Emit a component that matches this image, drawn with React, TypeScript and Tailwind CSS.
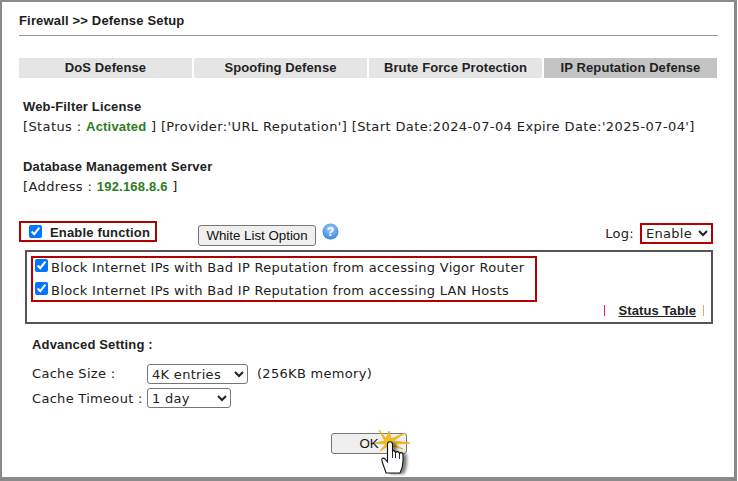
function HandCursor() {
  const hand = "M9.5 31 L7 28 C5 26 3 28 4 30 C5 34 7 38 8 42 L22 42 C24 38 25 35 25 30 L25 24 C25 21 22 21 21.5 23 C21 20 18 20 17.5 22 C17 19 14.5 19 14.5 21 L14.5 13 C14.5 10 9.5 10 9.5 13 Z";
  return (
    <svg className="absolute left-[47px] top-[-2px] overflow-visible" width="32" height="44" viewBox="0 0 32 44">
      <defs>
        <filter id="soft" x="-30%" y="-30%" width="160%" height="160%">
          <feGaussianBlur stdDeviation="1.5" />
        </filter>
      </defs>
      <path d="M1 -1 L8 8 L11 0 L13 8 L27 2 L15 10 L32 12 L15 13 L25 18 L14 15 L12 22 L10 15 L2 20 L8 13 L-3 12 L7 10 Z" fill="#f0c020" stroke="#eab41c" strokeWidth="1" />
      <path d={hand} fill="#000000" fillOpacity="0.5" filter="url(#soft)" transform="translate(4 1)" />
      <path d={hand} fill="#ffffff" stroke="#111111" strokeWidth="1.1" />
      <path d="M14.5 21 V27 M17.5 22 V27 M21.5 23 V28" stroke="#111111" strokeWidth="0.9" fill="none" />
    </svg>
  );
}

function HelpIcon() {
  return (
    <svg width="17" height="17" viewBox="0 0 17 17" className="shrink-0">
      <defs>
        <radialGradient id="help" cx="50%" cy="35%" r="70%">
          <stop offset="0%" stopColor="#a8d0fa" />
          <stop offset="100%" stopColor="#2f7fe0" />
        </radialGradient>
      </defs>
      <circle cx="8.5" cy="8.5" r="8" fill="url(#help)" />
      <text x="8.5" y="13" textAnchor="middle" fontSize="12" fontWeight="700" fill="#ffffff" fontFamily="Liberation Sans, sans-serif">?</text>
    </svg>
  );
}

const tabs = ["DoS Defense", "Spoofing Defense", "Brute Force Protection", "IP Reputation Defense"];

export default function App() {
  return (
    <div className="h-[481px] w-[738px] overflow-hidden bg-white font-['DejaVu_Sans',sans-serif] text-[13px] tracking-[0.3px] text-[#222]">
      <div className="h-[481px] w-[737px] border-t-2 border-l-2 border-r-[3px] border-b-[4px] border-[#8a8a8a] pl-[17px]">
        <div className="flex h-[34px] w-[699px] items-center border-b border-[#999] pt-[5px] font-['Liberation_Sans',sans-serif] text-[13px] font-bold tracking-[0.17px] text-[#1c1c1c]">
          Firewall &gt;&gt; Defense Setup
        </div>

        <div className="mt-[22px] grid w-[698px] grid-cols-4 gap-[2px] font-['Liberation_Sans',sans-serif] text-[13px] font-bold tracking-[0.1px]">
          {tabs.map((t, i) => (
            <div key={t} className={`flex h-[20px] items-center justify-center ${i === 3 ? "bg-[#c4c4c4]" : "bg-[#e5e5e5]"}`}>
              {t}
            </div>
          ))}
        </div>

        <div className="ml-[4px] mt-[21px] font-['Liberation_Sans',sans-serif] text-[13px] font-bold leading-[16px] tracking-[0.17px]">Web-Filter License</div>
        <div className="ml-[4px] mt-[4px] whitespace-nowrap leading-[16px] tracking-[0.39px]">
          [Status : <b className="font-['Liberation_Sans',sans-serif] tracking-[0.2px] text-[#2e7d1e]">Activated</b> ] [Provider:'URL Reputation'] [Start Date:2024-07-04 Expire Date:'2025-07-04']
        </div>

        <div className="ml-[4px] mt-[24px] font-['Liberation_Sans',sans-serif] text-[13px] font-bold leading-[16px] tracking-[0.17px]">Database Management Server</div>
        <div className="ml-[4px] mt-[4px] leading-[16px] tracking-[0.39px]">
          [Address : <b className="font-['Liberation_Sans',sans-serif] tracking-[0.2px] text-[#2e7d1e]">192.168.8.6</b> ]
        </div>

        <div className="mt-[26px] flex h-[29px] w-[694px] items-start">
          <label className="flex h-[21px] w-[138px] items-center border-2 border-[#b00000] pl-[8px]">
            <input type="checkbox" defaultChecked className="m-0 h-[13px] w-[13px]" />
            <span className="ml-[8px] pt-[2px] font-['Liberation_Sans',sans-serif] text-[13px] font-bold tracking-[0.17px]">Enable function</span>
          </label>
          <button className="ml-[41px] mt-[4px] h-[21px] w-[118px] rounded-[3px] border border-[#767676] bg-[#efefef] font-['Liberation_Sans',sans-serif] text-[13.3px] tracking-normal text-[#111]">
            White List Option
          </button>
          <div className="ml-[6px] mt-[2px]"><HelpIcon /></div>
          <span className="ml-auto mr-[6px] mt-[3px]">Log:</span>
          <div className="mt-[2px] border-2 border-[#b00000]">
            <select defaultValue="Enable" className="block h-[17px] w-[69px] outline-none">
              <option>Enable</option>
            </select>
          </div>
        </div>

        <div className="ml-[6px] h-[74px] w-[688px] border-2 border-[#555] pl-[4px] pt-[4px]">
          <div className="h-[46px] w-[506px] border-2 border-[#b00000] pl-[2px] leading-[18px]">
            <label className="flex h-[23px] items-start">
              <input type="checkbox" defaultChecked className="m-0 mr-[3px] mt-[1px] h-[13px] w-[13px]" />
              <span className="pt-[1px]">Block Internet IPs with Bad IP Reputation from accessing Vigor Router</span>
            </label>
            <label className="flex h-[19px] items-start">
              <input type="checkbox" defaultChecked className="m-0 mr-[3px] mt-[1px] h-[13px] w-[13px]" />
              <span className="pt-[1px]">Block Internet IPs with Bad IP Reputation from accessing LAN Hosts</span>
            </label>
          </div>
          <div className="flex h-[16px] items-center justify-end pr-[7px] pt-[1px] font-['Liberation_Sans',sans-serif] text-[13px] font-bold tracking-[0.1px]">
            <span className="h-[11px] w-px bg-[#e0206a]" />
            <span className="ml-[13px] mr-[1px] underline">Status Table</span>
            <span className="ml-[6px] h-[11px] w-px bg-[#f0a060]" />
          </div>
        </div>

        <div className="ml-[13px] mt-[13px] font-['Liberation_Sans',sans-serif] text-[13px] font-bold leading-[16px] tracking-[0.17px]">Advanced Setting :</div>
        <div className="ml-[13px] mt-[11px] flex h-[20px] items-center">
          <span className="w-[115px]">Cache Size :</span>
          <select defaultValue="4K" className="h-[20px] w-[101px] rounded-[3px] border border-[#767676]">
            <option value="4K">4K entries</option>
          </select>
          <span className="ml-[9px]">(256KB memory)</span>
        </div>
        <div className="ml-[13px] mt-[4px] flex h-[20px] items-center">
          <span className="w-[115px] pt-[1px]">Cache Timeout :</span>
          <select defaultValue="1" className="h-[20px] w-[84px] rounded-[3px] border border-[#767676]">
            <option value="1">1 day</option>
          </select>
        </div>

        <div className="mt-[25px] pl-[312px]">
          <div className="relative w-[76px]">
            <button className="h-[21px] w-[76px] rounded-[3px] border border-[#767676] bg-[#efefef] font-['Liberation_Sans',sans-serif] text-[13.3px] tracking-normal text-[#111]">OK</button>
            <HandCursor />
          </div>
        </div>
      </div>
    </div>
  );
}
